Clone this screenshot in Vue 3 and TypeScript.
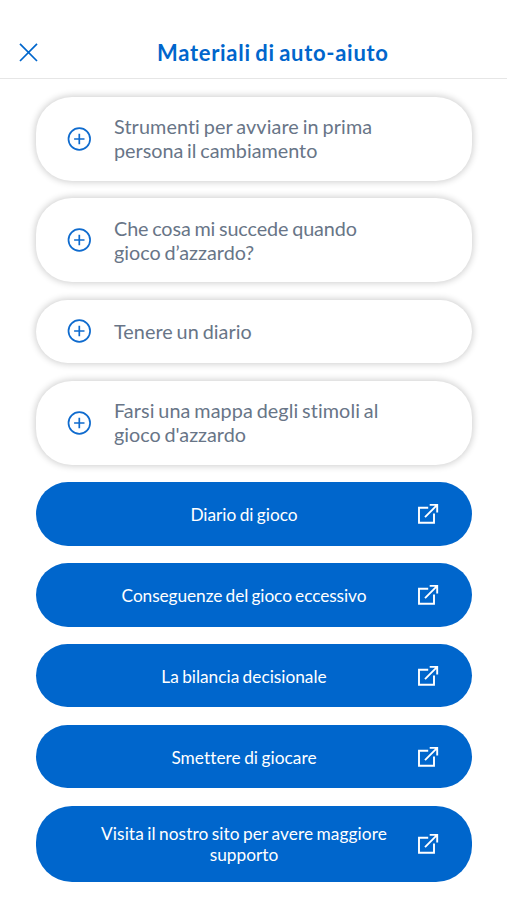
<script setup lang="ts">
interface Line { text: string; tracking?: number }
type Block = Line[]
const topics: Block[] = [
  [{ text: 'Strumenti per avviare in prima', tracking: 0.1 }, { text: 'persona il cambiamento' }],
  [{ text: 'Che cosa mi succede quando', tracking: -0.08 }, { text: 'gioco d’azzardo?' }],
  [{ text: 'Tenere un diario', tracking: 0.06 }],
  [{ text: 'Farsi una mappa degli stimoli al', tracking: 0.08 }, { text: "gioco d'azzardo" }],
]
const links: Block[] = [
  [{ text: 'Diario di gioco' }],
  [{ text: 'Conseguenze del gioco eccessivo', tracking: -0.08 }],
  [{ text: 'La bilancia decisionale' }],
  [{ text: 'Smettere di giocare', tracking: 0.05 }],
  [{ text: 'Visita il nostro sito per avere maggiore', tracking: 0.08 }, { text: 'supporto' }],
]
const spacing = (line: Line) => ({ letterSpacing: `${line.tracking ?? 0}px` })
</script>

<template>
  <div class="screen">
    <header class="header">
      <button class="close" aria-label="Chiudi">
        <svg width="20" height="20" viewBox="0 0 20 20"><path d="M1 .8 18 18M18 .8 1 18" /></svg>
      </button>
      <h1>Materiali di auto-aiuto</h1>
    </header>
    <main class="list">
      <button v-for="(t, i) in topics" :key="i" class="card" :class="{ tall: t.length > 1 }">
        <svg class="plus" width="24" height="24" viewBox="0 0 24 24"><circle cx="12.3" cy="12" r="10.8" /><path d="M12.3 6.8v10.4M7.1 12h10.4" /></svg>
        <span class="label"><span v-for="l in t" :key="l.text" class="line" :style="spacing(l)">{{ l.text }}</span></span>
      </button>
      <button v-for="(b, i) in links" :key="i" class="link" :class="{ tall: b.length > 1 }">
        <span class="caption"><span v-for="l in b" :key="l.text" class="line" :style="spacing(l)">{{ l.text }}</span></span>
        <svg class="open" width="22" height="22" viewBox="0 0 22 22"><path d="M11.2 4.8H2v14.9h15v-9.2M12.7 1.9h7.5v7.5M20.2 1.9 8 14.2" /></svg>
      </button>
    </main>
  </div>
</template>

<style>
body { background: #fff; }
</style>

<style scoped>
.screen { height: 900px; overflow: hidden; background: #fff; font-family: Lato, sans-serif; font-variant-ligatures: none; }
button { border: 0; padding: 0; margin: 0; font: inherit; font-variant-ligatures: none; background: none; box-sizing: border-box; }
svg { display: block; fill: none; flex: none; }
.line { display: block; white-space: nowrap; }
.header { height: 79px; box-sizing: border-box; border-bottom: 1px solid #e6e6e6; padding: 27px 0 0 19px; display: flex; align-items: center; }
.close { width: 20px; }
.close svg { stroke: #0066cc; stroke-width: 1.7; }
h1 { margin: 0 0 0 118px; font-size: 22px; line-height: 28px; font-weight: 700; letter-spacing: 0.7px; word-spacing: -1.5px; color: #0066cc; white-space: nowrap; }
.list { display: flex; flex-direction: column; gap: 17.5px; padding: 17.6px 35.5px 0 36px; }
.card { height: 63.4px; border-radius: 32px; display: flex; align-items: center; padding-left: 31px; background: #fff; color: #687587; box-shadow: 0 0 7px 1px rgba(0, 0, 0, 0.2); }
.card.tall { height: 84.1px; border-radius: 36px; }
.plus { stroke: #0f6bce; stroke-width: 1.7; }
.label { margin: 0 0 0.6px 23px; text-align: left; font-size: 19.8px; line-height: 24.4px; word-spacing: -1.3px; }
.link { height: 63.4px; border-radius: 32px; display: flex; align-items: center; background: #0066cc; color: #fff; }
.link.tall { height: 76.6px; border-radius: 36px; }
.caption { width: 416px; padding: 1px 34px 0; box-sizing: border-box; text-align: center; font-size: 17.3px; line-height: 21px; word-spacing: -1.1px; }
.link.tall .caption { padding-top: 0.4px; }
.open { margin-left: -35px; stroke: #fff; stroke-width: 1.9; }
</style>
